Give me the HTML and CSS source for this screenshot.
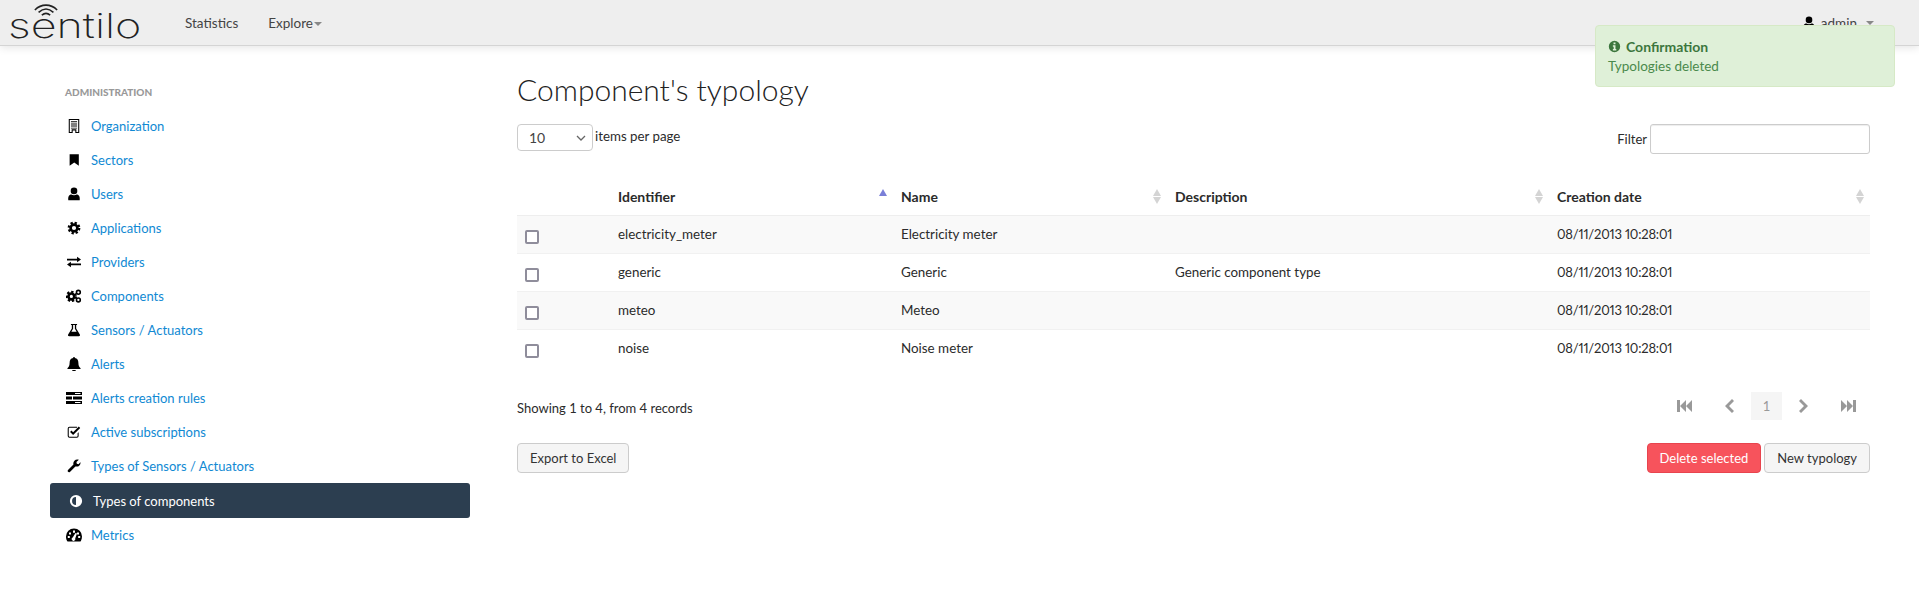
FILE: index.html
```html
<!DOCTYPE html>
<html lang="en">
<head>
    <meta charset="UTF-8">
    <meta name="viewport" content="width=device-width, initial-scale=1.0">
    <title>Component's typology</title>
    <link rel="stylesheet" href="styles.css">
</head>
<body>

    <header class="navbar">
        <a class="brand" href="#">
            <svg class="brand-waves" viewBox="0 0 30 14">
                <path d="M3 6.500C10 -0.500 20 -0.500 27 6.500M7 9C12 4.500 18 4.500 23 9M10.500 12C13.500 9.500 16.500 9.500 19.500 12"/>
            </svg>
            <span class="brand-name">sentilo</span>
        </a>
        <nav class="nav-links">
            <a href="#">Statistics</a>
            <a href="#">Explore<span class="caret"></span></a>
        </nav>
        <a class="nav-user" href="#">
            <svg class="icon" viewBox="0 0 16 16"><circle cx="8" cy="4.500" r="3.800"/><path d="M1.500 15c-.6-5 1.500-6.500 3.500-6.500 1.800 1.200 4.200 1.200 6 0 2 0 4.100 1.500 3.500 6.500z"/></svg>
            admin<span class="caret"></span>
        </a>
    </header>

    <div class="toast">
        <div class="toast-title">
            <svg class="icon" viewBox="0 0 16 16"><path fill-rule="evenodd" d="M8 1a7 7 0 1 0 0 14A7 7 0 0 0 8 1zM6.800 3h2.400v2.200H6.800zM6 6.500h3.200V11.200H10.200V13H6V11.200H7V8.200H6z"/></svg>
            Confirmation
        </div>
        <div class="toast-text">Typologies deleted</div>
    </div>

    <div class="page">
        <aside class="sidebar">
            <div class="sidebar-title">ADMINISTRATION</div>
            <ul class="side-menu">
                <li><a href="#">
                    <svg class="icon" viewBox="0 0 16 16"><path fill-rule="evenodd" d="M2 0h12v16H9.500v-3h-3v3H2zM3.200 1.200v13.600h2.100v-3h5.400v3h2.100V1.200zM4.500 2.500h7v1.200h-7zM4.500 5h7v1.200h-7zM4.500 7.500h7v1.200h-7zM4.500 10h7v.8h-7z"/></svg>
                    Organization</a></li>
                <li><a href="#">
                    <svg class="icon" viewBox="0 0 16 16"><path d="M3 1.500h10.500v13L8.250 10.800 3 14.500z"/></svg>
                    Sectors</a></li>
                <li><a href="#">
                    <svg class="icon" viewBox="0 0 16 16"><circle cx="8" cy="4.500" r="3.800"/><path d="M1.500 15c-.6-5 1.500-6.500 3.500-6.500 1.800 1.200 4.200 1.200 6 0 2 0 4.100 1.500 3.500 6.500z"/></svg>
                    Users</a></li>
                <li><a href="#">
                    <svg class="icon" viewBox="0 0 16 16"><circle class="gear-ring" cx="8" cy="8" r="3.900"/><circle class="gear-teeth" cx="8" cy="8" r="5.800"/></svg>
                    Applications</a></li>
                <li><a href="#">
                    <svg class="icon" viewBox="0 0 16 16"><path d="M0 4.200h11.500V2L16 5.200l-4.500 3.200V6.200H0zM16 9.800H4.500V7.600L0 10.800 4.500 14v-2.200H16z"/></svg>
                    Providers</a></li>
                <li><a href="#">
                    <svg class="icon icon-wide" viewBox="0 0 18 16"><circle class="gear-ring" cx="6" cy="8.500" r="3.300"/><circle class="gear-teeth" cx="6" cy="8.500" r="5"/><circle class="gear-small" cx="14" cy="3.800" r="2.200"/><circle class="gear-small" cx="14" cy="12.500" r="2.200"/></svg>
                    Components</a></li>
                <li><a href="#">
                    <svg class="icon" viewBox="0 0 16 16"><path fill-rule="evenodd" d="M4.500 1h7v1.200h-1v4l4.200 7c.5 1-.1 2-1.200 2H2.500c-1.100 0-1.700-1-1.200-2l4.200-7v-4h-1zM7 2.200v4.400L5 10h6L9 6.600V2.200z"/></svg>
                    Sensors / Actuators</a></li>
                <li><a href="#">
                    <svg class="icon" viewBox="0 0 16 16"><path d="M8 0a1 1 0 0 1 1 1.200c2.800.5 4 2.600 4 5.300 0 3.500 1 5 2.500 6.300v1H.5v-1C2 11.500 3 10 3 6.500c0-2.700 1.200-4.800 4-5.300A1 1 0 0 1 8 0zM6 14.800h4a2 2 0 0 1-4 0z"/></svg>
                    Alerts</a></li>
                <li><a href="#">
                    <svg class="icon icon-wide" viewBox="0 0 16 14"><path d="M0 1h16v3H0zM0 5.500h6v3H0zM7 5.500h9v3H7zM0 10h16v3H0z"/><path class="notch" d="M9 2h5.500v1H9zM9 11h5.500v1H9z"/></svg>
                    Alerts creation rules</a></li>
                <li><a href="#">
                    <svg class="icon" viewBox="0 0 16 16"><path fill-rule="evenodd" d="M2.800 2h8.700v1.200H2.800a.8.800 0 0 0-.8.800v8.500c0 .4.400.8.800.8h8.500c.4 0 .8-.4.800-.8V9.500l1.200-1.200v4.200a2 2 0 0 1-2 2H2.800a2 2 0 0 1-2-2V4a2 2 0 0 1 2-2z"/><path d="M7 11.500L3.500 8l1.600-1.600L7 8.300l6.500-6.500L15.100 3.400z"/></svg>
                    Active subscriptions</a></li>
                <li><a href="#">
                    <svg class="icon" viewBox="0 0 16 16"><path d="M15.500 4.200c0 2.500-2 4.500-4.500 4.500-.5 0-1-.1-1.400-.2l-6 6c-.8.8-1.800.8-2.400.2s-.6-1.600.2-2.400l6-6C7.300 5.900 7.200 5.400 7.200 5c0-2.500 2-4.500 4.500-4.500.6 0 1.300.1 1.800.4L10.800 3.500l.4 2 2 .5 2.100-2.400c.1.200.2.400.2.600z"/></svg>
                    Types of Sensors / Actuators</a></li>
                <li class="active"><a href="#">
                    <svg class="icon" viewBox="0 0 16 16"><path fill-rule="evenodd" d="M8 1a7 7 0 1 0 0 14A7 7 0 0 0 8 1zM8 3.500a4.500 4.500 0 0 0 0 9z"/></svg>
                    Types of components</a></li>
                <li><a href="#">
                    <svg class="icon icon-wide" viewBox="0 0 16 14"><path fill-rule="evenodd" d="M8 0.500a8 8 0 0 1 8 8c0 1.600-.4 3.100-1.100 4.400l-.5.600H1.600l-.5-.6A8 8 0 0 1 0 8.500a8 8 0 0 1 8-8zM7 2.500v2.200h2V2.500zM3 4.500v2h2v-2zM11 4.500v2h2v-2zM1.800 8v2h2V8zM12.200 8v2h2V8zM9.500 5L6.700 9.500a1.800 1.800 0 1 0 2.500 1L11 5.500z"/></svg>
                    Metrics</a></li>
            </ul>
        </aside>

        <main class="content">
            <h1>Component's typology</h1>

            <div class="toolbar">
                <label class="per-page">
                    <select>
                        <option>10</option>
                        <option>25</option>
                        <option>50</option>
                    </select>
                    items per page
                </label>
                <label class="filter">
                    Filter
                    <input type="text">
                </label>
            </div>

            <table class="grid">
                <colgroup>
                    <col class="col-check">
                    <col class="col-id">
                    <col class="col-name">
                    <col class="col-desc">
                    <col>
                </colgroup>
                <thead>
                    <tr>
                        <th></th>
                        <th><div class="th-inner">Identifier<span class="sort sort-asc"></span></div></th>
                        <th><div class="th-inner">Name<span class="sort"></span></div></th>
                        <th><div class="th-inner">Description<span class="sort"></span></div></th>
                        <th><div class="th-inner">Creation date<span class="sort"></span></div></th>
                    </tr>
                </thead>
                <tbody>
                    <tr>
                        <td><input type="checkbox" class="check"></td>
                        <td>electricity_meter</td>
                        <td>Electricity meter</td>
                        <td></td>
                        <td class="date">08/11/2013 10:28:01</td>
                    </tr>
                    <tr>
                        <td><input type="checkbox" class="check"></td>
                        <td>generic</td>
                        <td>Generic</td>
                        <td>Generic component type</td>
                        <td class="date">08/11/2013 10:28:01</td>
                    </tr>
                    <tr>
                        <td><input type="checkbox" class="check"></td>
                        <td>meteo</td>
                        <td>Meteo</td>
                        <td></td>
                        <td class="date">08/11/2013 10:28:01</td>
                    </tr>
                    <tr>
                        <td><input type="checkbox" class="check"></td>
                        <td>noise</td>
                        <td>Noise meter</td>
                        <td></td>
                        <td class="date">08/11/2013 10:28:01</td>
                    </tr>
                </tbody>
            </table>

            <div class="table-info">
                <span class="records">Showing 1 to 4, from 4 records</span>
                <div class="pager">
                    <a href="#"><svg viewBox="0 0 16 14"><path d="M0 1h3v12H0zM3 7l6-6v12zM9 7l6-6v12z"/></svg></a>
                    <a href="#"><svg viewBox="0 0 16 14"><path d="M11 0l2 2-5 5 5 5-2 2-7-7z"/></svg></a>
                    <span class="page-current">1</span>
                    <a href="#"><svg viewBox="0 0 16 14"><path d="M5 0L3 2l5 5-5 5 2 2 7-7z"/></svg></a>
                    <a href="#"><svg viewBox="0 0 16 14"><path d="M16 1h-3v12h3zM13 7L7 1v12zM7 7L1 1v12z"/></svg></a>
                </div>
            </div>

            <div class="actions">
                <button class="btn">Export to Excel</button>
                <div class="actions-right">
                    <button class="btn btn-danger">Delete selected</button>
                    <button class="btn">New typology</button>
                </div>
            </div>
        </main>
    </div>

</body>
</html>
```

FILE: styles.css
```css
body {
    font-family: Lato, "Noto Sans", sans-serif;
    font-size: 13px;
    color: #2b2b2b;
    background-color: #fff;
    margin: 0;
}

a {
    text-decoration: none;
}

.icon {
    width: 14px;
    height: 14px;
    flex: none;
    fill: #000;
}

.icon-wide {
    width: 16px;
    margin: 0 -1px;
}

.caret {
    display: inline-block;
    border-top: 4px solid #888;
    border-left: 4px solid transparent;
    border-right: 4px solid transparent;
    margin-left: 1px;
    vertical-align: 2px;
}

/* top bar */
.navbar {
    display: flex;
    align-items: center;
    height: 45px;
    background-color: #eee;
    border-bottom: 1px solid #d4d4d4;
    box-shadow: 0 2px 8px rgba(0, 0, 0, 0.1);
    padding: 0 45px 0 8px;
    font-size: 13.500px;
}

.brand {
    position: relative;
    width: 134px;
    height: 45px;
    color: #222;
}

.brand-name {
    display: block;
    font-family: Inter, Lato, sans-serif;
    font-size: 34px;
    font-weight: 200;
    line-height: 51px;
    transform: scaleX(1.320);
    transform-origin: left;
}

.brand-waves {
    position: absolute;
    left: 24px;
    top: 4px;
    width: 28px;
    height: 13px;
    fill: none;
    stroke: #222;
    stroke-width: 1.700;
}

.nav-links {
    display: flex;
    gap: 30px;
    margin-left: 43px;
}

.nav-links a {
    color: #444;
}

.nav-user {
    display: flex;
    align-items: center;
    gap: 5px;
    margin-left: auto;
    color: #444;
}

.nav-user .caret {
    margin-left: 4px;
    vertical-align: 0;
}

/* confirmation message */
.toast {
    position: absolute;
    top: 25px;
    left: 1595px;
    width: 300px;
    height: 62px;
    padding: 11px 12px;
    box-sizing: border-box;
    color: #4a8a4c;
    background-color: #dff0d8;
    border: 1px solid #d6e9c6;
    border-radius: 4px;
    line-height: 19px;
}

.toast-title {
    display: flex;
    align-items: center;
    gap: 5px;
    font-size: 14px;
    font-weight: bold;
    color: #3c763d;
}

.toast-title .icon {
    width: 13px;
    height: 13px;
    fill: #3c763d;
}

.toast-text {
    font-size: 13.500px;
    margin-top: 1px;
}

/* page columns */
.page {
    display: flex;
    padding-right: 49px;
}

.sidebar {
    flex: none;
    width: 420px;
    margin-left: 50px;
    padding-top: 40px;
}

.sidebar-title {
    font-size: 10px;
    font-weight: 900;
    color: #999;
    line-height: 13px;
    padding-left: 15px;
    margin-bottom: 10px;
}

.side-menu {
    list-style: none;
    margin: 0;
    padding: 0;
}

.side-menu a {
    display: flex;
    align-items: center;
    gap: 10px;
    height: 34px;
    padding-left: 17px;
    color: #1089d3;
}

.side-menu .active a {
    height: 35px;
    padding-left: 19px;
    color: #fff;
    background-color: #2c3e50;
    border-radius: 3px;
}

.side-menu .active .icon {
    fill: #fff;
}

.gear-ring {
    fill: none;
    stroke: #000;
    stroke-width: 3;
}

.gear-teeth {
    fill: none;
    stroke: #000;
    stroke-width: 3;
    stroke-dasharray: 2.500 2.050;
}

.gear-small {
    fill: none;
    stroke: #000;
    stroke-width: 1.800;
}

.notch {
    fill: #fff;
}

/* main column */
.content {
    flex: 1;
    margin-left: 47px;
    padding-top: 25px;
}

h1 {
    font-size: 30px;
    font-weight: 300;
    line-height: 36px;
    color: #222;
    margin: 0 0 17px;
}

.toolbar {
    display: flex;
    justify-content: space-between;
    align-items: flex-start;
    height: 30px;
}

.per-page {
    display: flex;
    gap: 2px;
    line-height: 25px;
    font-size: 13.300px;
}

.per-page select {
    appearance: none;
    width: 76px;
    height: 27px;
    padding-left: 11px;
    font-family: inherit;
    font-size: 14px;
    color: #444;
    background: #fff url("data:image/svg+xml,%3Csvg xmlns='http://www.w3.org/2000/svg' width='10' height='6'%3E%3Cpath d='M1 1l4 4 4-4' fill='none' stroke='%23666' stroke-width='1.300'/%3E%3C/svg%3E") no-repeat right 6px center;
    border: 1px solid #ccc;
    border-radius: 4px;
}

.filter {
    display: flex;
    align-items: center;
    gap: 3px;
}

.filter input {
    width: 220px;
    height: 30px;
    padding: 0 6px;
    box-sizing: border-box;
    border: 1px solid #ccc;
    border-radius: 3px;
    box-shadow: inset 0 1px 1px rgba(0, 0, 0, 0.075);
}

/* table */
.grid {
    width: 100%;
    table-layout: fixed;
    border-collapse: collapse;
    margin-top: 24px;
}

.col-check {
    width: 93px;
}

.col-id {
    width: 283px;
}

.col-name {
    width: 274px;
}

.col-desc {
    width: 382px;
}

.grid th {
    height: 37px;
    padding: 0 6px 0 8px;
    text-align: left;
    font-size: 14px;
    font-weight: bold;
    border-bottom: 1px solid #eee;
}

.th-inner {
    display: flex;
    justify-content: space-between;
    align-items: center;
}

.grid td {
    height: 35px;
    padding: 0 8px 2px;
    font-size: 13.400px;
    border-bottom: 1px solid #f1f1f1;
}

.grid .date {
    font-size: 13px;
    font-variant-numeric: proportional-nums;
    letter-spacing: -0.200px;
}

.grid tbody tr:nth-child(odd) {
    background-color: #f9f9f9;
}

.grid tbody tr:last-child td {
    border-bottom: none;
}

.check {
    appearance: none;
    display: block;
    width: 14px;
    height: 14px;
    margin: 6px 0 0;
    background-color: #fff;
    border: 2px solid #8f8d9b;
    border-radius: 2px;
}

.sort {
    display: flex;
    flex-direction: column;
    gap: 1px;
}

.sort::before {
    content: "";
    border-bottom: 7px solid #d4d4d4;
    border-left: 4px solid transparent;
    border-right: 4px solid transparent;
}

.sort::after {
    content: "";
    border-top: 7px solid #d4d4d4;
    border-left: 4px solid transparent;
    border-right: 4px solid transparent;
}

.sort-asc::before {
    border-bottom-color: #7a7fd8;
}

.sort-asc::after {
    border-top-color: transparent;
}

/* under the table */
.table-info {
    display: flex;
    justify-content: space-between;
    align-items: center;
    margin-top: 25px;
}

.records {
    padding-top: 3px;
}

.pager {
    display: flex;
    align-items: center;
}

.pager a {
    display: flex;
    justify-content: center;
    width: 44px;
}

.pager svg {
    width: 16px;
    height: 14px;
    fill: #999;
}

.page-current {
    width: 31px;
    height: 28px;
    line-height: 28px;
    text-align: center;
    color: #999;
    background-color: #f5f5f5;
    font-size: 13px;
}

.actions {
    display: flex;
    justify-content: space-between;
    margin-top: 23px;
}

.actions-right {
    display: flex;
    gap: 3px;
}

.btn {
    height: 30px;
    padding: 0 12px;
    font-family: inherit;
    font-size: 13px;
    color: #333;
    background-color: #f5f5f5;
    border: 1px solid #ccc;
    border-radius: 4px;
    cursor: pointer;
}

.btn-danger {
    color: #fff;
    background-color: #f7535c;
    border-color: #e8444e;
}
```
